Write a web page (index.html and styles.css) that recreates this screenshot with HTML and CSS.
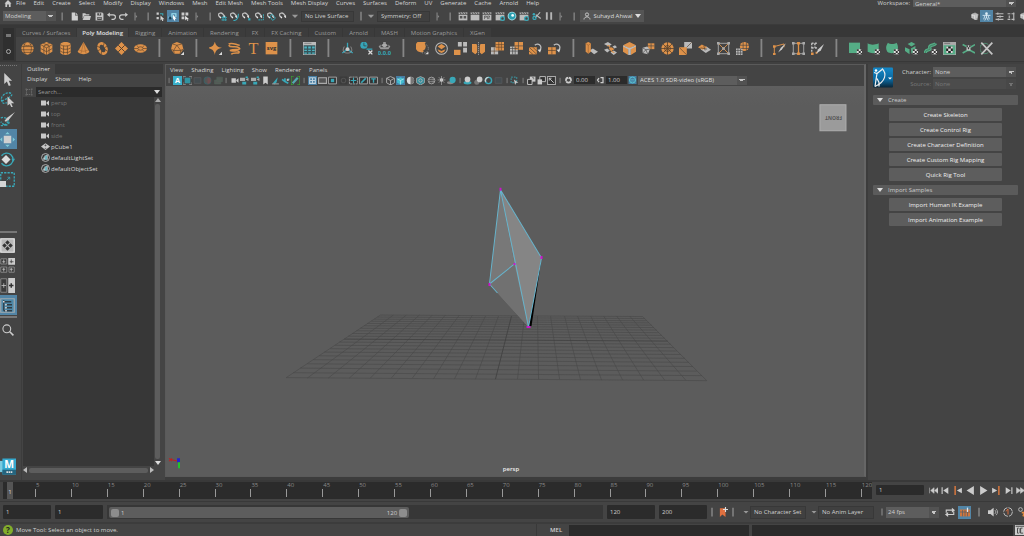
FILE: index.html
```html
<!DOCTYPE html>
<html lang="en">
<head>
<meta charset="utf-8">
<title>Modeling workspace</title>
<link rel="stylesheet" href="styles.css">
</head>
<body>
<svg class="defs" aria-hidden="true">
<defs>
<symbol id="home" viewBox="0 0 16 16"><path d="M0 8 8 0l8 8h-2v8h-4v-6H6v6H2V8z" fill="#ccc"/></symbol>
<symbol id="sep" viewBox="0 0 16 16"><path d="M8 1v14" stroke="#858585" stroke-width="2.4"/></symbol>
<symbol id="sepr" viewBox="0 0 16 16"><path d="M6 1v14" stroke="#858585" stroke-width="2"/><path d="m7 5 3 3-3 3z" fill="#858585"/></symbol>
<symbol id="bar" viewBox="0 0 16 16"><path d="M8 -1v18" stroke="#868686" stroke-width="1.6"/></symbol>
<symbol id="caret" viewBox="0 0 16 16"><path d="M3 6h10l-5 5z" fill="#999"/></symbol>
<symbol id="new" viewBox="0 0 16 16"><path d="M3 1h6v5h5v9H3zM10 1l4 4h-4z" fill="#d0d0d0"/></symbol>
<symbol id="open" viewBox="0 0 16 16"><path d="M1 2h5l1 2h6v2H4l-3 6zM4 7h12l-2 7H1z" fill="#c8c8c8"/></symbol>
<symbol id="save" viewBox="0 0 16 16"><path d="M1 1h12l2 2v12H1z" fill="#c4c4c4"/><path d="M4 2h7v4H4zM4 9h8v5H4z" fill="#4a4a4a"/><path d="M5 11h6M8 2v3" stroke="#c4c4c4" stroke-width="1.5"/></symbol>
<symbol id="undo" viewBox="0 0 16 16"><path d="M4 5h7a3.5 3.5 0 0 1 0 8H8" fill="none" stroke="#ccc" stroke-width="2"/><path d="M0 5l5-4v8z" fill="#ccc"/></symbol>
<symbol id="redo" viewBox="0 0 16 16"><path d="M12 5H5a3.5 3.5 0 0 0 0 8h3" fill="none" stroke="#ccc" stroke-width="2"/><path d="M16 5l-5-4v8z" fill="#ccc"/></symbol>
<symbol id="selh" viewBox="0 0 16 16"><path d="M1 1h4v4H1zM1 9h4v4H1z" fill="#ccc"/><path d="M7 3h5v3" stroke="#39a8b8" stroke-width="2" fill="none"/><path d="m8 6 7 7h-3l1 3h-2l-1-3-2 2z" fill="#d5d5d5"/></symbol>
<symbol id="selo" viewBox="0 0 16 16"><path d="M1 9h6V3h7v6" stroke="#9fe4f4" stroke-width="2" fill="none"/><path d="M2 8h4v5H2z" fill="#173b52"/><path d="m9 5 6 7h-3l1 3h-2l-1-3-1 2z" fill="#fff"/></symbol>
<symbol id="selc" viewBox="0 0 16 16"><path d="M1 1h5v5H1zM8 1h5v5H8zM1 8h5v5H1z" fill="#ccc"/><path d="m7 6 8 7h-3l1 3h-2l-1-3-3 2z" fill="#eee" stroke="#444" stroke-width=".6"/></symbol>
<symbol id="mag" viewBox="0 0 16 16"><path d="M3 9 1 6c-1-3 4-6 7-3l4 5" fill="none" stroke="#bdbdbd" stroke-width="2.4"/><path d="m3 8 2 3M10 7l2 3" stroke="#eee" stroke-width="2.4"/></symbol>
<symbol id="mgrid" viewBox="0 0 16 16"><use href="#mag"/><path d="M6 10h10M6 14h10M9 7v9M13 7v9" stroke="#39a8b8" stroke-width="1.5"/></symbol>
<symbol id="mcurve" viewBox="0 0 16 16"><use href="#mag"/><path d="M6 15c6 1 9-5 9-12" stroke="#39a8b8" stroke-width="2" fill="none"/></symbol>
<symbol id="mpoint" viewBox="0 0 16 16"><use href="#mag"/><path d="M11 11h4v4h-4z" fill="#39a8b8"/></symbol>
<symbol id="mcent" viewBox="0 0 16 16"><use href="#mag"/><path d="M6 14h9V3" stroke="#39a8b8" stroke-width="1.7" stroke-dasharray="3 1" fill="none"/></symbol>
<symbol id="mplane" viewBox="0 0 16 16"><use href="#mag"/><path d="M9 4l6 7-5 4-5-7z" fill="none" stroke="#39a8b8" stroke-width="1.7"/></symbol>
<symbol id="clap" viewBox="0 0 16 16"><path d="M1 6h14v9H1z" fill="#bcbcbc"/><path d="M1 2h14v3H1z" fill="#aaa"/><path d="m3 2 2 3M7 2l2 3M11 2l2 3" stroke="#444" stroke-width="1.5"/></symbol>
<symbol id="clap1" viewBox="0 0 16 16"><use href="#clap"/><path d="M3 8h4v4H3zM9 8h4v4H9z" fill="#555"/></symbol>
<symbol id="clap3" viewBox="0 0 16 16"><use href="#clap"/><path d="M4 13V8h3v2H5M9 13V8h3v2l-2 1 2 2" stroke="#444" fill="none"/></symbol>
<symbol id="clapg" viewBox="0 0 16 16"><use href="#clap"/><circle cx="12" cy="12" r="3" fill="#444" stroke="#39a8b8" stroke-width="2"/></symbol>
<symbol id="hyper" viewBox="0 0 16 16"><circle cx="8" cy="8" r="7" fill="#a5dbe3"/><circle cx="8" cy="8" r="5.500" fill="#299eb0"/><circle cx="9" cy="7" r="2.2" fill="#eefcff"/></symbol>
<symbol id="rset" viewBox="0 0 16 16"><path d="m5 11 8-9M6 6l8 6" stroke="#bbb" stroke-width="1.8"/><circle cx="4" cy="11" r="2.5" fill="none" stroke="#39a8b8" stroke-width="2"/><circle cx="3" cy="5" r="2" fill="#39a8b8"/></symbol>
<symbol id="pause" viewBox="0 0 16 16"><path d="M3 2h3v12H3zM10 2h3v12h-3z" fill="#b5b5b5"/></symbol>
<symbol id="user" viewBox="0 0 16 16"><circle cx="8" cy="5" r="3.2" fill="none" stroke="#ddd" stroke-width="1.6"/><path d="M2 15c0-7 12-7 12 0" fill="none" stroke="#ddd" stroke-width="1.6"/></symbol>
<symbol id="head" viewBox="0 0 16 16"><path d="M2 4 9 1l6 3-2 10H9L2 10z" fill="#aaa"/><path d="M3 6h5v6M5 3v8M9 4v10M12 4v7" stroke="#eee" fill="none"/></symbol>
<symbol id="man" viewBox="0 0 16 16"><circle cx="8" cy="3" r="2.4" fill="#dcecf5"/><path d="M1 6h14M8 5v5M5 15l3-6 3 6M5 7l-2 6M11 7l2 6" stroke="#dcecf5" stroke-width="1.5" fill="none"/></symbol>
<symbol id="attr" viewBox="0 0 16 16"><path d="M1 3h14M3 8h12M1 13h14M5 1v4M9 6v4M6 11v4" stroke="#bbb" stroke-width="2"/></symbol>
<symbol id="tool" viewBox="0 0 16 16"><path d="M1 3h13M1 13h13" stroke="#bbb" stroke-width="2" stroke-dasharray="5 2"/><path d="M12 1v14M4 6v5" stroke="#bbb" stroke-width="2"/></symbol>

<symbol id="sphere" viewBox="0 0 20 20"><circle cx="10" cy="10" r="9.5" fill="#de924a"/><path d="M1 7h18M0 12h20M3 16h14M7 1c-4 5-4 13 0 18M13 1c4 5 4 13 0 18M4 4c4 2 8 2 12 0" stroke="#54402d" fill="none"/></symbol>
<symbol id="cube" viewBox="0 0 20 20"><path d="m10 0 9 4v11l-9 5-9-5V4z" fill="#de924a"/><path d="m1 4 9 5 9-5M10 9v11M5 2l9 4v12M15 2 6 6v12M1 10l9 5 9-5" stroke="#54402d" fill="none"/></symbol>
<symbol id="cyl" viewBox="0 0 20 20"><path d="M2 3c3-4 13-4 16 0v14c-3 4-13 4-16 0z" fill="#de924a"/><path d="M2 4c3 3 13 3 16 0M2 9c3 3 13 3 16 0M2 14c3 3 13 3 16 0M7 6v13M13 6v13" stroke="#54402d" fill="none"/></symbol>
<symbol id="cone" viewBox="0 0 20 20"><path d="m10 0 9 15c-3 5-15 5-18 0z" fill="#de924a"/><path d="M3 12c4 3 10 3 14 0M10 1 6 18M10 1l4 17" stroke="#a66934" fill="none"/></symbol>
<symbol id="torus" viewBox="0 0 20 20"><g transform="rotate(-25 10 10)"><ellipse cx="10" cy="10" rx="5.7" ry="8.2" fill="none" stroke="#de924a" stroke-width="4"/><path d="M3 2l4 5M17 2l-4 5M2 10h4M14 10h4M4 18l3-5M16 18l-3-5" stroke="#54402d"/></g></symbol>
<symbol id="plane" viewBox="0 0 20 20"><path d="m10 0 10 10-10 10L0 10z" fill="#de924a"/><path d="m5 5 10 10M15 5 5 15" stroke="#54402d" stroke-width="1.5"/></symbol>
<symbol id="disc" viewBox="0 0 20 20"><ellipse cx="10" cy="10" rx="10" ry="6.5" fill="#de924a"/><ellipse cx="10" cy="10" rx="4" ry="2.6" fill="none" stroke="#54402d"/><path d="M0 10h6M14 10h6M4 5l3 3M16 5l-3 3M4 15l3-3M16 15l-3-3" stroke="#54402d"/></symbol>
<symbol id="plat" viewBox="0 0 20 20"><path d="m9 0 8 3 2 8-5 7H5l-5-7 2-8z" fill="#de924a"/><path d="m2 3 7 2 8-2M9 5 4 13h11zM0 11l4 2 1 5M19 11l-4 2-1 5" stroke="#54402d" fill="none"/><path d="M20 15v5h-5z" fill="#ddd"/></symbol>
<symbol id="super" viewBox="0 0 20 20"><path d="M9-1c1 6 4 9 11 10-8 2-10 5-11 11-1-7-4-9-11-11 7-1 10-4 11-10z" fill="#de924a"/><path d="M20 15v5h-5z" fill="#ddd"/></symbol>
<symbol id="helix" viewBox="0 0 20 20"><path d="M1 3c6-3 12 2 17 2M1 5c3 5 11 0 16 4s-8 1-14 4M3 13c4 3 13-2 14 2s-9 0-12 4" stroke="#de924a" stroke-width="2.4" fill="none"/></symbol>
<symbol id="type" viewBox="0 0 20 20"><text x="10" y="19" text-anchor="middle" class="glyph-t">T</text></symbol>
<symbol id="svgi" viewBox="0 0 20 20"><path d="M1 0h18v19H1z" fill="#de924a"/><text x="10" y="13" text-anchor="middle" class="glyph-svg">svg</text></symbol>
<symbol id="sheet" viewBox="0 0 20 20"><path d="M0 0h20v20H0z" fill="#bbb"/><path d="M1 5h18v14H1z" fill="#36545a"/><path d="M2 7h4v3H2zM8 7h4v3H8zM14 7h4v3h-4zM2 12h4v2H2zM8 12h4v2H8zM14 12h4v2h-4zM2 16h4v2H2zM8 16h4v2H8zM14 16h4v2h-4z" fill="#4fb5c2"/><path d="M2 2h11" stroke="#666"/></symbol>
<symbol id="axis" viewBox="0 0 20 20"><path d="M10 1v10L2 17M10 11l8 6" stroke="#36a5b8" stroke-width="2" fill="none"/><path d="M5 7c-4 8 0 10 5 10s9-2 5-10" stroke="#aaa" fill="none"/><circle cx="10" cy="11" r="3" fill="#ccc"/></symbol>
<symbol id="hist" viewBox="0 0 20 20"><circle cx="6" cy="5" r="5.5" fill="#36a5b8"/><path d="M6 1v5h4" stroke="#333" fill="none"/><path d="M10 11h9" stroke="#36a5b8" stroke-width="2"/><path d="m13 13 6 6M19 13l-6 6" stroke="#ddd" stroke-width="2"/></symbol>
<symbol id="freeze" viewBox="0 0 20 20"><path d="m10 1 5 4-5 4-5-4z" fill="#aaa"/><path d="m1 7 3-3v4h12V4l3 3-3 4H4zM8 0h4v3H8z" fill="#999"/><text x="10" y="20" text-anchor="middle" class="glyph-num">0,0,0</text></symbol>
<symbol id="br" viewBox="0 0 20 20"><path d="M2-2h-5v24h5M18-2h5v24h-5" stroke="#37b52c" stroke-width="1.6" fill="none"/></symbol>
<symbol id="combine" viewBox="0 0 20 20"><path d="M15 1A9 9 0 1 0 12 15 8 8 0 0 1 15 1z" fill="#de924a"/><circle cx="12" cy="10" r="7" fill="none" stroke="#aaa" stroke-dasharray="2 2"/><circle cx="8" cy="7" r="7" fill="#de924a"/><path d="m14 19 5-4v4z" fill="#ddd"/></symbol>
<symbol id="bool" viewBox="0 0 20 20"><circle cx="10" cy="10" r="9" fill="none" stroke="#bbb" stroke-width="1.6"/><path d="m10 3 6 4-6 4-6-4zM4 11l6 3 6-3-2 4-4 2-4-2z" fill="#de924a"/></symbol>
<symbol id="separate" viewBox="0 0 20 20"><path d="M6 0h6v7H6zM14 0h6v7h-6zM14 9h6v7h-6z" fill="#bbb"/><path d="M0 12h10v8H0z" fill="#de924a"/></symbol>
<symbol id="mirror" viewBox="0 0 20 20"><path d="M0 3h7l1 3v10l-3 3-5-4zM20 3h-7l-1 3v10l3 3 5-4z" fill="#de924a"/><path d="M10 0v20" stroke="#bbb" stroke-dasharray="2 1"/></symbol>
<symbol id="smooth" viewBox="0 0 20 20"><path d="M0 8h11v11H0z" fill="#bbb"/><path d="M7 0h13v13H7z" fill="#de924a"/><path d="M7 4h13M7 8h13M12 0v13M16 0v13M0 14h11M5 8v11" stroke="#62462d"/></symbol>
<symbol id="reduce" viewBox="0 0 20 20"><path d="M0 7h12v12H0z" fill="#bbb"/><path d="M7 0h13v12H7z" fill="#de924a"/><path d="M7 6h13M13 0v12M0 10h12M0 14h12M4 7v12M8 7v12" stroke="#444"/></symbol>
<symbol id="remesh" viewBox="0 0 20 20"><path d="M0 8h12v11H0z" fill="#de924a"/><path d="M0 8l12 11M6 8l6 6M0 14l6 5" stroke="#54402d"/><path d="M9 5a5 5 0 1 1 8 7" fill="none" stroke="#bbb" stroke-width="2"/><path d="m13 12 6-1-2 5z" fill="#ddd"/></symbol>
<symbol id="retopo" viewBox="0 0 20 20"><path d="M0 8h12v11H0z" fill="#de924a"/><path d="M6 8v11M0 13h12" stroke="#54402d"/><path d="M9 5a5 5 0 1 1 8 7" fill="none" stroke="#bbb" stroke-width="2"/><path d="m13 12 6-1-2 5z" fill="#ddd"/></symbol>
<symbol id="extrude" viewBox="0 0 20 20"><path d="m7 13 5-3 8 5-6 4z" fill="#bbb"/><path d="m1 2 4-2 4 2v13l-4 3-4-3z" fill="#de924a"/><path d="m1 2 4 3 4-3M5 5v12" stroke="#9a6130" fill="none"/></symbol>
<symbol id="bridge" viewBox="0 0 20 20"><path d="m0 3 6-3 6 4-5 3zM10 16l5-3 5 3-5 4zM0 12l5-2 4 3-4 3zM13 7l4-2 3 3-4 2z" fill="#bbb"/><path d="m7 10 5-2 4 3-5 3z" fill="#de924a"/><path d="M5 6c7-3 1 9 11 10" stroke="#de924a" fill="none" stroke-width="1.6"/></symbol>
<symbol id="bevel" viewBox="0 0 20 20"><path d="m10 0 10 5-10 5L0 5zM0 6l8 4v10l-8-5zM20 6l-8 4v10l8-5z" fill="#de924a"/><path d="m9 9-9-4v2l8 4v9h4v-9l8-4V5l-9 4z" fill="#bbb"/></symbol>
<symbol id="multi" viewBox="0 0 20 20"><path d="M9 2h10v9H9z" fill="#de924a"/><path d="m1 9 7-2 4 4-3 8-8-2z" fill="#bbb"/><path d="m1 9 5 3 6-1M6 12l-5 5M14 2v9M9 6h10M6 12l3 7" stroke="#444" fill="none"/></symbol>
<symbol id="circ" viewBox="0 0 20 20"><circle cx="10" cy="10" r="9.5" fill="#de924a"/><circle cx="10" cy="10" r="4.5" fill="none" stroke="#54402d" stroke-width="1.3"/><path d="M10 0v20M0 10h20M3 3l14 14M17 3 3 17" stroke="#54402d" stroke-width="1.2"/></symbol>
<symbol id="dup" viewBox="0 0 20 20"><path d="M8 0h12v10H8z" fill="#bbb"/><path d="M0 8h12v12H0z" fill="#de924a"/><path d="m0 8 12 12M12 8 20 0" stroke="#54402d"/></symbol>
<symbol id="collapse" viewBox="0 0 20 20"><path d="m4 11 9-4 7 5-8 5z" fill="#bbb"/><path d="m0 8 6-4 8 4-7 4z" fill="#de924a"/><path d="m4 9 10 2M9 6l2 7" stroke="#54402d"/></symbol>
<symbol id="lattice" viewBox="0 0 20 20"><path d="M2 2h16v16H2z" fill="none" stroke="#aaa" stroke-width="1.4"/><path d="m3 3 14 14M17 3 3 17" stroke="#de924a" stroke-width="1.4"/><path d="M0 0h4v4H0zM16 0h4v4h-4zM0 16h4v4H0zM16 16h4v4h-4zM8 8h4v4H8z" fill="#aaa"/></symbol>
<symbol id="smspread" viewBox="0 0 20 20"><circle cx="13" cy="7" r="7" fill="#de924a"/><path d="M0 10h10v10H0z" fill="#bbb"/><path d="M0 13h10M0 17h10M3 10v10M7 10v10M6 5h14M8 10h12M11 0v10M16 0v14" stroke="#444"/></symbol>
<symbol id="cut" viewBox="0 0 20 20"><path d="M2 19V7l15-4v5" stroke="#de924a" stroke-width="1.5" fill="none"/><path d="m8 16 4-7 8-7-6 9z" fill="#ccc"/><path d="M0 5h4v4H0zM0 17h4v3H0z" fill="#de924a"/></symbol>
<symbol id="loop" viewBox="0 0 20 20"><path d="M2 2h16v16H2z" fill="none" stroke="#aaa" stroke-width="1.4"/><path d="M10 2v16" stroke="#de924a" stroke-width="2"/><path d="M0 0h4v4H0zM16 0h4v4h-4zM0 16h4v4H0zM16 16h4v4h-4z" fill="#aaa"/><circle cx="10" cy="2" r="2.5" fill="#de924a"/><circle cx="10" cy="18" r="2.5" fill="#de924a"/></symbol>
<symbol id="quad" viewBox="0 0 20 20"><path d="M1 2h10M1 9h8M1 2v16M6 2v7" stroke="#bbb" stroke-width="2.4" stroke-dasharray="3 2"/><path d="M0 16h4v4H0zM7 15h3v3H7z" fill="#de924a"/><path d="m8 18 3-7 9-8-5 10z" fill="#ccc"/></symbol>
<symbol id="chk" viewBox="0 0 20 20"><path d="M12 11h8v8h-8z" fill="#ddd"/><path d="M12 11h3v3h-3zM18 11h2v3h-2zM15 14h3v3h-3zM12 17h3v2h-3zM18 17h2v2h-2z" fill="#333"/></symbol>
<symbol id="uvp" viewBox="0 0 20 20"><path d="M0 1h17v16H0z" fill="#55ad86"/><use href="#chk"/></symbol>
<symbol id="uvc" viewBox="0 0 20 20"><path d="M1 2c5 3 10 3 17 0v12c-5 4-11 4-17 1z" fill="#55ad86"/><use href="#chk"/></symbol>
<symbol id="uvs" viewBox="0 0 20 20"><path d="M3 1c4 3 9 3 13 0 3 4 3 9 1 14-6 3-11 3-15 0-3-5-2-10 1-14z" fill="#55ad86"/><use href="#chk"/></symbol>
<symbol id="uva" viewBox="0 0 20 20"><path d="m4 3 6-3 6 3-6 4zM0 8l7 3v8l-7-5zM9 10l7-4v6l-6 6z" fill="#55ad86"/><use href="#chk"/></symbol>
<symbol id="uvr" viewBox="0 0 20 20"><path d="M2 17c0-7 9-3 7-8S16 6 18 2" fill="none" stroke="#55ad86" stroke-width="5"/><path d="M2 17c0-7 9-3 7-8S16 6 18 2" fill="none" stroke="#3b6853"/><use href="#chk"/></symbol>
<symbol id="uve" viewBox="0 0 20 20"><path d="M0 0h20v20H0z" fill="#aaa"/><path d="M1 5h18v14H1z" fill="#55ad86"/><path d="M5 7h10v10H5z" fill="#222"/><path d="M5 7h3v3H5zM12 7h3v3h-3zM8 10h4v4H8zM5 14h3v3H5zM12 14h3v3h-3z" fill="#ddd"/><path d="M2 2h9" stroke="#555"/></symbol>
<symbol id="uvx" viewBox="0 0 20 20"><path d="m1 4 8 4h4l7-4M1 17l7-4h5l7 4" stroke="#55ad86" stroke-width="2.5" fill="none"/><path d="M7 5h6v8H7z" fill="#ccc"/><path d="M7 5h2v3H7zM11 5h2v3h-2zM9 8h2v3H9z" fill="#333"/></symbol>
<symbol id="uvk" viewBox="0 0 20 20"><path d="M13 4a8 8 0 1 0 0 12" stroke="#55ad86" fill="none"/><path d="m2 1 17 18M19 1 2 19" stroke="#c5c5c5" stroke-width="2.6"/></symbol>

<symbol id="tsel" viewBox="0 0 20 20"><path d="M5 0l12 12h-5l3 7-3 1-3-7-4 4z" fill="#ccc"/></symbol>
<symbol id="tlas" viewBox="0 0 20 20"><path d="M3 13C-2 7 9-2 15 2c4 4-10 8-12 10 0 4 4 4 6 2" stroke="#39a8b8" stroke-width="1.7" stroke-dasharray="3 1.5" fill="none"/><path d="m10 6 9 9h-4l2 5h-2l-2-4-3 2z" fill="#ccc"/></symbol>
<symbol id="tpaint" viewBox="0 0 20 20"><path d="M1 8c6-3 14 4 10 8s-8-1-10-3M1 18c4 1 10-3 10-7" stroke="#39a8b8" stroke-width="1.7" stroke-dasharray="3 1.5" fill="none"/><path d="m6 12 3-4 11-8-8 10-4 3z" fill="#ccc"/></symbol>
<symbol id="tmove" viewBox="0 0 20 20"><path d="M5 5h10v10H5z" fill="#d0d0d0"/><path d="m7 3 3-3 3 3zM7 17l3 3 3-3zM3 7l-3 3 3 3zM17 7l3 3-3 3z" fill="#80cbd8"/></symbol>
<symbol id="trot" viewBox="0 0 20 20"><path d="M2 5a8.500 8.500 0 1 1 0 10" fill="none" stroke="#39a8b8" stroke-width="1.8"/><path d="m8 4 6 6-6 6-6-6z" fill="#ddd"/><path d="m15 9 5 0-2 4z" fill="#39a8b8"/></symbol>
<symbol id="tscale" viewBox="0 0 20 20"><path d="M1 1h18v18H1z" fill="none" stroke="#39a8b8" stroke-width="1.7" stroke-dasharray="3 1.5"/><path d="m9 11 4-4h-3M13 7v3" stroke="#39a8b8" fill="none"/><path d="M0 12h8v8H0z" fill="#d5d5d5"/></symbol>
<symbol id="lone" viewBox="0 0 20 20"><path d="M1 1h18v18H1z" fill="#b8b8b8" stroke="#eee" stroke-width="1.5"/><path d="m10 3 3 3-3 3-3-3zM10 17l3-3-3-3-3 3zM3 10l3-3 3 3-3 3zM17 10l-3-3-3 3 3 3z" fill="#333"/></symbol>
<symbol id="lfour" viewBox="0 0 20 20"><path d="M1 1h8v7H1zM1 12h8v7H1zM12 12h7v7h-7z" fill="#3b3b3b" stroke="#999"/><path d="M11 0h9v9h-9z" fill="#ccc"/><path d="M5 2v5M3 5h4M5 13v5M3 15h4M15 13v5M13 15h4" stroke="#ccc"/><path d="M15 2v5M13 5h5" stroke="#333"/></symbol>
<symbol id="ltwo" viewBox="0 0 20 20"><path d="M1 1h8v18H1z" fill="#3b3b3b" stroke="#999"/><path d="M11 0h9v20h-9z" fill="#ccc"/><path d="M5 7v6M2 10h6" stroke="#ccc"/><path d="M15 7v6M12 10h6" stroke="#333" stroke-width="2"/></symbol>
<symbol id="lout" viewBox="0 0 20 20"><path d="M1 1h18v18H1z" fill="#4d88a8" stroke="#a0a9ae" stroke-width="1.6"/><path d="M5 3v14M5 5h10M8 9h8M8 13h8M5 17h11" stroke="#303c44" stroke-width="1.7"/><path d="M4 4h2v2H4zM7 8h2v2H7zM7 12h2v2H7zM7 16h2v2H7z" fill="#ddd"/></symbol>
<symbol id="find" viewBox="0 0 20 20"><circle cx="8" cy="8" r="6.5" fill="none" stroke="#ccc" stroke-width="1.8"/><path d="m13 13 6 6" stroke="#ccc" stroke-width="2.6"/></symbol>
<symbol id="maya" viewBox="0 0 20 20"><path d="M0 3h5v14H0z" fill="#7acbe0"/><path d="M3 0h17v20H3z" fill="#35a9ce"/><path d="M3 14h17v6H3z" fill="#25647e"/><text x="11.500" y="12" text-anchor="middle" class="glyph-m">M</text><path d="M8 17h8" stroke="#ddd" stroke-width="2" stroke-dasharray="2 .7"/></symbol>
<symbol id="cam" viewBox="0 0 16 16"><path d="M0 3h10v10H0zM11 7l5-4v10l-5-4z" fill="#c8c8c8"/></symbol>
<symbol id="mesh" viewBox="0 0 16 16"><path d="m8 2 8 6-8 6-8-6z" fill="#c8c8c8"/><path d="m8 4 2 2-2 2-2-2zM8 10l2 2h-4z" fill="#555"/></symbol>
<symbol id="set" viewBox="0 0 16 16"><circle cx="8" cy="8" r="7" fill="none" stroke="#bbb" stroke-width="1.6"/><path d="M4 12V8h2V5l6-2v9z" fill="#b9c9cc"/><path d="M8 5h2v7H8z" fill="#39a8b8"/></symbol>
<symbol id="frame" viewBox="0 0 16 16"><path d="M3 3h10v10H3z" fill="none" stroke="#757575" stroke-width="1.5" stroke-dasharray="3 1.5"/><path d="M1 1h3v3H1zM12 1h3v3h-3zM1 12h3v3H1zM12 12h3v3h-3z" fill="#666"/></symbol>

<symbol id="va" viewBox="0 0 16 16"><path d="M0 0h16v16H0z" fill="#3aafc9"/><text x="8" y="13" text-anchor="middle" class="glyph-a">A</text></symbol>
<symbol id="vbox" viewBox="0 0 16 16"><path d="M3 3h10v10H3z" fill="#3293a0"/><path d="M0 5V1h5M11 1h5v4M16 11v4h-5M5 15H0v-4" stroke="#888" stroke-width="1.6" fill="none"/></symbol>
<symbol id="vdim" viewBox="0 0 16 16"><path d="M2 3h12v10H2z" fill="#444c50" stroke="#56595b" stroke-width="1.5"/></symbol>
<symbol id="vdimc" viewBox="0 0 16 16"><circle cx="8" cy="8" r="6" fill="#555" stroke="#3f6065" stroke-width="2"/><path d="M8 2a6 6 0 0 1 0 12z" fill="#704e51"/></symbol>
<symbol id="vdimg" viewBox="0 0 16 16"><path d="M1 7h11v7H1zM5 2h10v8H5z" fill="#555a57" stroke="#50665a"/></symbol>
<symbol id="vcam2" viewBox="0 0 16 16"><path d="M0 3h9v6H0zM10 6l5-3v6l-5-3z" fill="#aaa"/><path d="M4 10h7v5H4zM10 1h4v3h-4z" fill="#39a8b8"/></symbol>
<symbol id="book" viewBox="0 0 16 16"><path d="M4 1h8v14l-4-3-4 3z" fill="#ccc"/></symbol>
<symbol id="vbrush" viewBox="0 0 16 16"><path d="m3 13 9-11-2 9-4 4z" fill="#39a8b8"/><path d="M2 14h12" stroke="#999" stroke-width="2"/></symbol>
<symbol id="vnode" viewBox="0 0 16 16"><path d="m2 6 5 4 6 3M7 10V4M12 6h3" stroke="#39a8b8" stroke-width="3"/><circle cx="12" cy="7" r="2" fill="#bbb"/></symbol>
<symbol id="vpen" viewBox="0 0 16 16"><path d="M5 0H0v16h5M11 0h5v16h-5" stroke="#37b52c" stroke-width="1.8" fill="none"/><path d="m3 13 9-10" stroke="#55a8b0" stroke-width="4"/></symbol>
<symbol id="vgrid" viewBox="0 0 16 16"><path d="M0 0h16v16H0z" fill="#477da2"/><path d="M3 3h10v10H3zM8 3v10M3 8h10" fill="none" stroke="#bdd1dd" stroke-width="2"/></symbol>
<symbol id="vgate" viewBox="0 0 16 16"><path d="M1 3h14v10H1z" fill="#555" stroke="#aaa" stroke-width="2"/></symbol>
<symbol id="vgatet" viewBox="0 0 16 16"><path d="M1 2h14v12H1z" fill="#333" stroke="#aaa" stroke-width="1.6"/><path d="M5 5h6v6H5z" fill="#39a8b8"/></symbol>
<symbol id="vdark" viewBox="0 0 16 16"><path d="M1 1h14v14H1z" fill="#3b3b3b"/><circle cx="8" cy="8" r="4" fill="none" stroke="#505050" stroke-width="2"/></symbol>
<symbol id="vcross" viewBox="0 0 16 16"><path d="M1 2h14v12H1z" fill="#333" stroke="#aaa" stroke-width="1.5" stroke-dasharray="4 1"/><path d="M8 3v10M3 8h10" stroke="#39a8b8" stroke-width="2"/></symbol>
<symbol id="vdiag" viewBox="0 0 16 16"><path d="M1 2h14v12H1z" fill="#333" stroke="#aaa" stroke-width="1.6"/><path d="m4 12 8-8" stroke="#39a8b8" stroke-width="3"/></symbol>
<symbol id="vt" viewBox="0 0 16 16"><path d="M1 2h14v12H1z" fill="#333" stroke="#aaa" stroke-width="1.6"/><path d="M4 5h8M8 5v7" stroke="#39a8b8" stroke-width="2.4"/></symbol>
<symbol id="vwire" viewBox="0 0 16 16"><path d="m8 1 7 3v8l-7 4-7-4V4zM1 4l7 4 7-4M8 8v8" fill="none" stroke="#b5b5b5" stroke-width="1.5"/></symbol>
<symbol id="vshade" viewBox="0 0 16 16"><path d="M0 0h16v16H0z" fill="#477da2"/><path d="m8 2 6 3v7l-6 3-6-3V5z" fill="#43bdd0"/><path d="m2 5 6 3 6-3M8 8v7" stroke="#d3f6f8" fill="none"/></symbol>
<symbol id="vhalf" viewBox="0 0 16 16"><circle cx="8" cy="8" r="6.5" fill="#ddd"/><path d="M8 1.500a6.500 6.500 0 0 1 0 13z" fill="#777"/></symbol>
<symbol id="vtex" viewBox="0 0 16 16"><path d="m8 1 7 3v8l-7 4-7-4V4z" fill="#338b99" stroke="#aaa" stroke-width="1.5"/><circle cx="8" cy="8" r="3" fill="none" stroke="#bbb" stroke-width="1.5"/></symbol>
<symbol id="vchk" viewBox="0 0 16 16"><circle cx="8" cy="8" r="6" fill="#333" stroke="#aaa" stroke-width="1.5"/><path d="M5 3v10M9 2v12M12 4v8M3 6h11M3 10h11" stroke="#aaa"/></symbol>
<symbol id="vlight" viewBox="0 0 16 16"><circle cx="8" cy="7" r="3" fill="#ddd"/><path d="M8 0v16M1 7h14M3 2l10 10M13 2 3 12" stroke="#bbb"/></symbol>
<symbol id="vshadow" viewBox="0 0 16 16"><ellipse cx="6" cy="12" rx="6" ry="2.500" fill="#888"/><circle cx="10" cy="7" r="5.500" fill="#39a8b8"/></symbol>
<symbol id="vao" viewBox="0 0 16 16"><ellipse cx="8" cy="12" rx="7" ry="3" fill="#39a8b8"/><circle cx="8" cy="6" r="5" fill="#ccc"/></symbol>
<symbol id="vblur" viewBox="0 0 16 16"><circle cx="5" cy="11" r="4.500" fill="#777"/><circle cx="10" cy="6" r="5" fill="#ccc"/></symbol>
<symbol id="vaa" viewBox="0 0 16 16"><circle cx="8" cy="8" r="5.500" fill="none" stroke="#39a8b8" stroke-width="2.500"/><path d="M8 2.500a5.500 5.500 0 0 0-5 8" fill="none" stroke="#ccc" stroke-width="2.500"/></symbol>
<symbol id="viso" viewBox="0 0 16 16"><path d="M2 2h10v10H2z" fill="none" stroke="#39a8b8" stroke-width="1.600" stroke-dasharray="3 2"/><path d="m7 6 8 6h-4l-2 4z" fill="#ccc"/></symbol>
<symbol id="vstack" viewBox="0 0 16 16"><path d="M5 1h10v9H5z" fill="#ccc"/><path d="M1 6h8v9H1z" fill="#333" stroke="#ccc" stroke-width="1.600"/><path d="M9 3h3v3" stroke="#333" fill="none"/></symbol>
<symbol id="vback" viewBox="0 0 16 16"><path d="M5 1h10v9H5z" fill="#333" stroke="#ccc" stroke-width="1.500"/><path d="M1 6h8v9H1z" fill="#ccc"/></symbol>
<symbol id="vx" viewBox="0 0 16 16"><path d="M1 1h14v14H1z" fill="#333" stroke="#aaa" stroke-width="1.800"/><path d="m4 4 8 8M8 4H4v4" stroke="#ccc" stroke-width="1.600" fill="none"/></symbol>
<symbol id="vexp" viewBox="0 0 16 16"><circle cx="8" cy="8" r="5" fill="none" stroke="#ccc" stroke-width="3.500"/><path d="M8 0v4M15 12l-3-2M1 12l3-2" stroke="#444" stroke-width="1.500"/></symbol>
<symbol id="vgam" viewBox="0 0 16 16"><path d="M8 3h5v10H8M5 4 2 8l3 4" fill="none" stroke="#ccc" stroke-width="2.500"/></symbol>
<symbol id="vcm" viewBox="0 0 16 16"><path d="M0 0h16v16H0z" fill="#477da2"/><circle cx="8" cy="8" r="6" fill="none" stroke="#58c6d2" stroke-width="2"/><path d="M4 7h8M4 10h8" stroke="#58c6d2"/></symbol>

<symbol id="p1" viewBox="0 0 16 16"><path d="M1 3v10M9 3v10L3 8zM16 3v10l-6-5z" fill="#ccc" stroke="#ccc" stroke-width="1"/></symbol>
<symbol id="p2" viewBox="0 0 16 16"><path d="M2 2v12" stroke="#ccc" stroke-width="2"/><path d="M13 2v12L4 8z" fill="#ccc"/></symbol>
<symbol id="p3" viewBox="0 0 16 16"><path d="M2 0v16" stroke="#e07a3e" stroke-width="2.500"/><path d="M14 3v10L5 8z" fill="#ccc"/></symbol>
<symbol id="p4" viewBox="0 0 16 16"><path d="M14 0v16L1 8z" fill="#ccc"/></symbol>
<symbol id="p5" viewBox="0 0 16 16"><path d="M2 0v16l13-8z" fill="#ccc"/></symbol>
<symbol id="p6" viewBox="0 0 16 16"><path d="M14 0v16" stroke="#e07a3e" stroke-width="2.500"/><path d="M2 3v10l9-5z" fill="#ccc"/></symbol>
<symbol id="p7" viewBox="0 0 16 16"><path d="M14 2v12" stroke="#ccc" stroke-width="2"/><path d="M3 2v12l9-6z" fill="#ccc"/></symbol>
<symbol id="p8" viewBox="0 0 16 16"><path d="M1 3v10l7-5zM8 3v10l7-5zM16 3v10" fill="#ccc" stroke="#ccc"/></symbol>
<symbol id="bm" viewBox="0 0 16 16"><path d="M3 2h9v14l-5-4-4 4z" fill="#e0703f"/><path d="M12 0v8M8 4h8" stroke="#ddd" stroke-width="1.800"/></symbol>
<symbol id="rep" viewBox="0 0 16 16"><path d="M2 9V5h10M14 7v5H4" fill="none" stroke="#ccc" stroke-width="1.800"/><path d="m11 1 5 4-5 4zM5 8l-5 4 5 4z" fill="#ccc"/></symbol>
<symbol id="cache" viewBox="0 0 16 16"><path d="M0 4h16v11H0z" fill="#d0763c"/><path d="M0 8h16M4 5v10M8 5v10M12 5v10" stroke="#5a5f65" stroke-width="1.200"/><path d="M12 1v7" stroke="#dbe9f2" stroke-width="2"/></symbol>
<symbol id="snd" viewBox="0 0 16 16"><path d="M0 5h4l5-4v14l-5-4H0z" fill="#ccc"/><path d="M11 5c2 2 2 4 0 6M13 3c3 3 3 7 0 10" fill="none" stroke="#bbb" stroke-width="1.300"/></symbol>
<symbol id="clock" viewBox="0 0 16 16"><circle cx="8" cy="8" r="7" fill="none" stroke="#bbb" stroke-width="1.600" stroke-dasharray="9 2"/><path d="M8 3v9M5 7l3-4" stroke="#e0703f" stroke-width="1.500"/></symbol>
<symbol id="run" viewBox="0 0 16 16"><circle cx="4" cy="4" r="3" fill="none" stroke="#bbb" stroke-width="1.500"/><path d="M6 9h5l4-3M11 8l-3 7M10 11l5 4" stroke="#e08a3f" stroke-width="2.500" fill="none"/></symbol>
<symbol id="help" viewBox="0 0 16 16"><circle cx="8" cy="8" r="8" fill="#82ad2c"/><text x="8" y="12.500" text-anchor="middle" class="glyph-q">?</text></symbol>
<symbol id="script" viewBox="0 0 16 16"><path d="M0 0h16v16H0z" fill="#ccc"/><path d="M6 5H4v8h2M8 5v8M12 5H9v8h4M1 2h14" stroke="#444" stroke-width="1.500" fill="none"/></symbol>
</defs>
</svg>

<header>
<div class="menurow">
<svg class="i home" role="img" aria-label="Home"><use href="#home"/></svg>
<nav class="menu mainmenu"><a href="#">File</a><a href="#">Edit</a><a href="#">Create</a><a href="#">Select</a><a href="#">Modify</a><a href="#">Display</a><a href="#">Windows</a><a href="#">Mesh</a><a href="#">Edit Mesh</a><a href="#">Mesh Tools</a><a href="#">Mesh Display</a><a href="#">Curves</a><a href="#">Surfaces</a><a href="#">Deform</a><a href="#">UV</a><a href="#">Generate</a><a href="#">Cache</a><a href="#">Arnold</a><a href="#">Help</a></nav>
<div class="workspace"><label for="ws">Workspace:</label><select id="ws" class="sel"><option>General*</option></select></div>
</div>
<div class="status">
<select class="sel mode" aria-label="Menu set"><option>Modeling</option></select>
<div class="cells files">
<svg><use href="#sep"/></svg><button aria-label="New"><svg><use href="#new"/></svg></button><button aria-label="Open"><svg><use href="#open"/></svg></button><button aria-label="Save"><svg><use href="#save"/></svg></button><button aria-label="Undo"><svg><use href="#undo"/></svg></button><button aria-label="Redo"><svg><use href="#redo"/></svg></button><svg><use href="#sepr"/></svg><svg><use href="#sep"/></svg><button aria-label="Hierarchy"><svg><use href="#selh"/></svg></button><button class="on" aria-label="Object"><svg><use href="#selo"/></svg></button><button aria-label="Component"><svg><use href="#selc"/></svg></button><svg><use href="#sepr"/></svg><svg><use href="#sep"/></svg><button aria-label="Snap grid"><svg><use href="#mgrid"/></svg></button><button aria-label="Snap curve"><svg><use href="#mcurve"/></svg></button><button aria-label="Snap point"><svg><use href="#mpoint"/></svg></button><button aria-label="Snap center"><svg><use href="#mcent"/></svg></button><button aria-label="Snap plane"><svg><use href="#mplane"/></svg></button><button aria-label="Make live"><svg><use href="#mag"/></svg></button>
</div>
<svg class="i"><use href="#caret"/></svg>
<input class="flat" aria-label="Live surface" value="No Live Surface">
<svg class="i"><use href="#sep"/></svg>
<svg class="i"><use href="#caret"/></svg>
<input class="flat" aria-label="Symmetry" value="Symmetry: Off">
<div class="cells render">
<svg><use href="#sepr"/></svg><svg><use href="#sep"/></svg><button aria-label="Render view"><svg><use href="#clap1"/></svg></button><button aria-label="Render"><svg><use href="#clap"/></svg></button><button aria-label="IPR"><svg><use href="#clap3"/></svg></button><button aria-label="Render settings"><svg><use href="#clapg"/></svg></button><button aria-label="Hypershade"><svg><use href="#hyper"/></svg></button><button aria-label="Render setup"><svg><use href="#clapg"/></svg></button><button aria-label="Light editor"><svg><use href="#rset"/></svg></button><button aria-label="Pause"><svg><use href="#pause"/></svg></button><svg><use href="#sepr"/></svg><svg><use href="#sep"/></svg>
</div>
<button class="user"><svg class="i"><use href="#user"/></svg><span>Suhayd Ahwal</span><i class="tri"></i></button>
<div class="cells sides"><button aria-label="Modeling toolkit"><svg><use href="#head"/></svg></button><button class="on" aria-label="Character controls"><svg><use href="#man"/></svg></button><button aria-label="Attribute editor"><svg><use href="#attr"/></svg></button><button aria-label="Tool settings"><svg><use href="#tool"/></svg></button><button aria-label="Channel box"><svg><use href="#head"/></svg></button></div>
</div>
<div class="shelf">
<div class="shelfside"><b></b><i></i></div>
<div class="shelfmain">
<nav class="tabs"><button>Curves / Surfaces</button><button class="act">Poly Modeling</button><button>Rigging</button><button>Animation</button><button>Rendering</button><button>FX</button><button>FX Caching</button><button>Custom</button><button>Arnold</button><button>MASH</button><button>Motion Graphics</button><button>XGen</button></nav>
<div class="cells tools">
<button aria-label="Sphere"><svg><use href="#sphere"/></svg></button><button aria-label="Cube"><svg><use href="#cube"/></svg></button><button aria-label="Cylinder"><svg><use href="#cyl"/></svg></button><button aria-label="Cone"><svg><use href="#cone"/></svg></button><button aria-label="Torus"><svg><use href="#torus"/></svg></button><button aria-label="Plane"><svg><use href="#plane"/></svg></button><button aria-label="Disc"><svg><use href="#disc"/></svg></button><svg class="bar"><use href="#bar"/></svg>
<button aria-label="Platonic"><svg><use href="#plat"/></svg></button><svg class="bar"><use href="#bar"/></svg>
<button aria-label="Super shape"><svg><use href="#super"/></svg></button><button aria-label="Sweep"><svg><use href="#helix"/></svg></button><button aria-label="Type"><svg><use href="#type"/></svg></button><button aria-label="SVG"><svg><use href="#svgi"/></svg></button><svg class="bar"><use href="#bar"/></svg>
<button aria-label="Content"><svg><use href="#sheet"/></svg></button><svg class="bar"><use href="#bar"/></svg>
<button aria-label="Pivot"><svg><use href="#axis"/></svg></button><button aria-label="Delete history"><svg><use href="#hist"/></svg></button><button aria-label="Freeze"><svg><use href="#freeze"/></svg></button><svg class="bar"><use href="#bar"/></svg>
<button aria-label="Combine"><svg><use href="#br"/><use href="#combine"/></svg></button><button aria-label="Boolean"><svg><use href="#bool"/></svg></button><button aria-label="Separate"><svg><use href="#separate"/></svg></button><button aria-label="Mirror"><svg><use href="#mirror"/></svg></button><button aria-label="Smooth"><svg><use href="#smooth"/></svg></button><button aria-label="Reduce"><svg><use href="#reduce"/></svg></button><button aria-label="Remesh"><svg><use href="#remesh"/></svg></button><button aria-label="Retopologize"><svg><use href="#br"/><use href="#retopo"/></svg></button><svg class="bar"><use href="#bar"/></svg>
<button aria-label="Extrude"><svg><use href="#extrude"/></svg></button><button aria-label="Bridge"><svg><use href="#bridge"/></svg></button><button aria-label="Bevel"><svg><use href="#bevel"/></svg></button><button aria-label="Extract"><svg><use href="#multi"/></svg></button><button aria-label="Circularize"><svg><use href="#circ"/></svg></button><button aria-label="Duplicate face"><svg><use href="#dup"/></svg></button><button aria-label="Collapse"><svg><use href="#collapse"/></svg></button><button aria-label="Merge"><svg><use href="#lattice"/></svg></button><button aria-label="Spread"><svg><use href="#smspread"/></svg></button><svg class="bar"><use href="#bar"/></svg>
<button aria-label="Multi-cut"><svg><use href="#cut"/></svg></button><button aria-label="Edge loop"><svg><use href="#loop"/></svg></button><button aria-label="Quad draw"><svg><use href="#quad"/></svg></button><svg class="bar"><use href="#bar"/></svg>
<button aria-label="Planar UV"><svg><use href="#uvp"/></svg></button><button aria-label="Cylindrical UV"><svg><use href="#uvc"/></svg></button><button aria-label="Spherical UV"><svg><use href="#uvs"/></svg></button><button aria-label="Automatic UV"><svg><use href="#uva"/></svg></button><button aria-label="Contour UV"><svg><use href="#uvr"/></svg></button><button aria-label="UV editor"><svg><use href="#uve"/></svg></button><button aria-label="Unfold"><svg><use href="#uvx"/></svg></button><button aria-label="Cut UV"><svg><use href="#uvk"/></svg></button>
</div>
</div>
</div>
</header>

<main>
<aside class="toolbox">
<div class="grip"></div>
<button aria-label="Select"><svg><use href="#tsel"/></svg></button><button aria-label="Lasso"><svg><use href="#tlas"/></svg></button><button aria-label="Paint select"><svg><use href="#tpaint"/></svg></button><button class="on" aria-label="Move"><svg><use href="#tmove"/></svg></button><button aria-label="Rotate"><svg><use href="#trot"/></svg></button><button aria-label="Scale"><svg><use href="#tscale"/></svg></button>
<div class="layouts"><button aria-label="Single view"><svg><use href="#lone"/></svg></button><button aria-label="Four view"><svg><use href="#lfour"/></svg></button><button aria-label="Two view"><svg><use href="#ltwo"/></svg></button><button class="on" aria-label="Outliner view"><svg><use href="#lout"/></svg></button></div>
<button class="find" aria-label="Search"><svg><use href="#find"/></svg></button>
<svg class="maya"><use href="#maya"/></svg>
</aside>

<section class="outliner">
<div class="otab"><h2>Outliner</h2></div>
<nav class="menu omenu"><a href="#">Display</a><a href="#">Show</a><a href="#">Help</a></nav>
<div class="search"><svg class="i"><use href="#frame"/></svg><div class="sbox"><input type="text" aria-label="Search" placeholder="Search..."><i class="tri"></i></div></div>
<div class="obody">
<ul class="tree">
<li class="dim"><svg class="i"><use href="#cam"/></svg>persp</li><li class="dim"><svg class="i"><use href="#cam"/></svg>top</li><li class="dim"><svg class="i"><use href="#cam"/></svg>front</li><li class="dim"><svg class="i"><use href="#cam"/></svg>side</li>
<li><svg class="i"><use href="#mesh"/></svg>pCube1</li><li><svg class="i"><use href="#set"/></svg>defaultLightSet</li><li><svg class="i"><use href="#set"/></svg>defaultObjectSet</li>
</ul>
<div class="vbar"><i class="tri up"></i><b></b><i class="tri"></i></div>
</div>
<div class="hbar"><i class="tri left"></i><b></b><i class="tri right"></i></div>
</section>

<section class="panel">
<nav class="menu vmenu"><a href="#">View</a><a href="#">Shading</a><a href="#">Lighting</a><a href="#">Show</a><a href="#">Renderer</a><a href="#">Panels</a></nav>
<div class="vtools">
<div class="cells vicons">
<svg class="s"><use href="#sep"/></svg><button aria-label="Camera select"><svg><use href="#va"/></svg></button><button aria-label="Lock camera"><svg><use href="#vbox"/></svg></button><button aria-label="Attributes"><svg><use href="#vdim"/></svg></button><button aria-label="Color"><svg><use href="#vdimc"/></svg></button><button aria-label="Image"><svg><use href="#vdimg"/></svg></button><svg class="s"><use href="#sep"/></svg>
<button aria-label="Camera"><svg><use href="#cam"/></svg></button><button aria-label="Camera lock"><svg><use href="#vcam2"/></svg></button><button aria-label="Camera settings"><svg><use href="#vcam2"/></svg></button><button aria-label="Bookmark"><svg><use href="#book"/></svg></button><button aria-label="Brush"><svg><use href="#vbrush"/></svg></button><button aria-label="Pan zoom"><svg><use href="#vnode"/></svg></button><button aria-label="Pencil"><svg><use href="#vpen"/></svg></button><svg class="s"><use href="#sep"/></svg>
<button aria-label="Grid"><svg><use href="#vgrid"/></svg></button><button aria-label="Film gate"><svg><use href="#vgate"/></svg></button><button aria-label="Resolution gate"><svg><use href="#vgatet"/></svg></button><button aria-label="Gate mask"><svg><use href="#vdark"/></svg></button><button aria-label="Field chart"><svg><use href="#vcross"/></svg></button><button aria-label="Safe action"><svg><use href="#vdiag"/></svg></button><button aria-label="Safe title"><svg><use href="#vt"/></svg></button><svg class="s"><use href="#sep"/></svg>
<button aria-label="Wireframe"><svg><use href="#vwire"/></svg></button><button aria-label="Shaded"><svg><use href="#vshade"/></svg></button><button aria-label="Default material"><svg><use href="#vhalf"/></svg></button><button aria-label="Wire on shaded"><svg><use href="#vtex"/></svg></button><button aria-label="Textured"><svg><use href="#vchk"/></svg></button><button aria-label="Lights"><svg><use href="#vlight"/></svg></button><button aria-label="Shadows"><svg><use href="#vshadow"/></svg></button><svg class="s"><use href="#sep"/></svg>
<button aria-label="Occlusion"><svg><use href="#vao"/></svg></button><button aria-label="Motion blur"><svg><use href="#vblur"/></svg></button><button aria-label="Anti-aliasing"><svg><use href="#vaa"/></svg></button><button aria-label="Depth of field"><svg><use href="#vdim"/></svg></button><svg class="s"><use href="#sep"/></svg><button aria-label="Isolate"><svg><use href="#viso"/></svg></button><svg class="s"><use href="#sep"/></svg><button aria-label="X-ray"><svg><use href="#vstack"/></svg></button><button aria-label="X-ray joints"><svg><use href="#vback"/></svg></button><button aria-label="X-ray components"><svg><use href="#vx"/></svg></button><svg class="s"><use href="#sep"/></svg>
</div>
<svg class="i"><use href="#vexp"/></svg><input class="num" aria-label="Exposure" value="0.00"><svg class="i"><use href="#vgam"/></svg><input class="num" aria-label="Gamma" value="1.00"><svg class="i"><use href="#vcm"/></svg><select class="sel aces" aria-label="View transform"><option>ACES 1.0 SDR-video (sRGB)</option></select>
</div>
<div class="canvas">
<svg class="scene" viewBox="167 87 697 390" preserveAspectRatio="xMidYMid slice" role="img" aria-label="Perspective view">
<path class="grid" d="M381 316 287 378.500M394 316 308 379M407 316 329 379M420 316 350 379M433 316 371 379M446 316 392 379M460 316 413 379M473 316 434 380M486 317 455 380M499 317 476 380M525 317 518 380M538 317 539 380M551 317 560 380M565 317 581 381M578 317 602 381M591 317 623 381M604 317 644 381M617 317 665 381M630 317 686 381M643 317.500 707 381.500"/>
<path class="grid" d="M287 378.500 707 381.500M294 373.600 702 376.500M301 369 697 372M308 364.700 693 367.400M314 360.600 689 363.200M320 356.700 685 359.200M325 353 681 355.400M331 349.600 677 351.900M336 346.200 674 348.500M340 343 671 345.100M349 337.100 665 339.100M353 334.400 662 336.300M357 331.700 659 333.600M361 329.200 657 331M365 326.700 654 328.500M368 324.400 652 326.100M372 322.200 649 323.800M375 320.100 647 321.700M378 318 645 319.500M381 316 643 317.500"/>
<path class="axis" d="M512 317 496 380M345 340 668 342"/>
<path d="m542 259-10 68-4 1z" fill="#000"/>
<path d="m501 191-11 94 39 43-14-63z" fill="#787878"/><path d="m490 285 25-20 14 63z" fill="#717171"/><path d="m501 191 41 68-13 69-14-63z" fill="#858585"/>
<path d="m490 285 11-94 41 68-13 69-28-137M490 285l25-20M490 285l8 9" fill="none" stroke="#67b3cb"/>
<path d="M500 189h2v3h-2zM541 257h2v3h-2zM514 264h2v2h-2zM489 284h2v3h-2zM527 327h4v2h-4z" fill="#c916ca"/>
<path d="M820 106h26v26h-26z" fill="#9b9b9b" stroke="#adadad"/><text class="front" transform="rotate(180 833.500 119)" x="833.500" y="121" text-anchor="middle">FRONT</text>
<path d="M180 461v3M171 460l8 2" stroke="#c02020" fill="none"/><path d="M178 459h3v4h-3z" fill="#2424cd"/><path d="M180 463v6" stroke="#20c52c" stroke-width="2"/><path d="m170 459 3 3m0-3-3 3" stroke="#c02020"/>
<text class="persp" x="511.500" y="472" text-anchor="middle">persp</text>
</svg>
</div>
</section>

<aside class="char">
<div class="chead">
<svg class="logo" viewBox="0 0 20 20"><defs><linearGradient id="lg" x1="0" y1="0" x2="0" y2="1"><stop offset="0" stop-color="#1589c9"/><stop offset=".6" stop-color="#0b679d"/><stop offset="1" stop-color="#0a2638"/></linearGradient></defs><rect width="20" height="20" rx="1" fill="url(#lg)"/><path d="M9 1c5 5 4 13-7 18" fill="none" stroke="#eee" stroke-width="1.100"/><path d="m1 5 3 1 5-4M4 6l-1 6-1 7M4 11l2 4v4" fill="none" stroke="#f2f2f2" stroke-width="1.200"/><circle cx="3" cy="3" r="1.300" fill="#fff"/><path d="M15 10h4l-2 2z" fill="#fff"/></svg>
<div class="fields"><label for="ch">Character:</label><select id="ch" class="sel"><option>None</option></select><label for="src" class="off">Source:</label><select id="src" class="sel off" disabled><option>None</option></select></div>
</div>
<h3><i class="tri"></i>Create</h3>
<div class="stack"><button>Create Skeleton</button><button>Create Control Rig</button><button>Create Character Definition</button><button>Create Custom Rig Mapping</button><button>Quick Rig Tool</button></div>
<h3><i class="tri"></i>Import Samples</h3>
<div class="stack"><button>Import Human IK Example</button><button>Import Animation Example</button></div>
</aside>
</main>

<footer>
<div class="timerow">
<div class="timeline"><div class="now">1</div><ol class="ticks"><li>5</li><li>10</li><li>15</li><li>20</li><li>25</li><li>30</li><li>35</li><li>40</li><li>45</li><li>50</li><li>55</li><li>60</li><li>65</li><li>70</li><li>75</li><li>80</li><li>85</li><li>90</li><li>95</li><li>100</li><li>105</li><li>110</li><li>115</li><li>120</li></ol></div>
<input class="field frame" aria-label="Current frame" value="1">
<div class="cells play"><button aria-label="Go to start"><svg><use href="#p1"/></svg></button><button aria-label="Step back"><svg><use href="#p2"/></svg></button><button aria-label="Previous key"><svg><use href="#p3"/></svg></button><button aria-label="Play backwards"><svg><use href="#p4"/></svg></button><button aria-label="Play"><svg><use href="#p5"/></svg></button><button aria-label="Next key"><svg><use href="#p6"/></svg></button><button aria-label="Step forward"><svg><use href="#p7"/></svg></button><button aria-label="Go to end"><svg><use href="#p8"/></svg></button></div>
</div>
<div class="rangerow">
<input class="field" aria-label="Animation start" value="1"><input class="field" aria-label="Range start" value="1">
<div class="range"><div class="thumb"><b></b><span>1</span><span class="end">120</span><b></b></div></div>
<input class="field" aria-label="Range end" value="120"><input class="field" aria-label="Animation end" value="200">
<div class="marks"><svg class="i"><use href="#sep"/></svg><button aria-label="Bookmark"><svg class="i"><use href="#bm"/></svg></button><svg class="i"><use href="#sep"/></svg></div>
<svg class="i"><use href="#caret"/></svg><input class="flat" aria-label="Character set" value="No Character Set">
<svg class="i"><use href="#caret"/></svg><input class="flat" aria-label="Animation layer" value="No Anim Layer">
<svg class="i"><use href="#sep"/></svg>
<select class="sel fps" aria-label="Frame rate"><option>24 fps</option></select>
<div class="marks opts"><button aria-label="Loop"><svg class="i"><use href="#rep"/></svg></button><button class="on" aria-label="Cached playback"><svg class="i"><use href="#cache"/></svg></button><svg class="i"><use href="#sep"/></svg><button aria-label="Sound"><svg class="i"><use href="#snd"/></svg></button><button aria-label="Auto key"><svg class="i"><use href="#clock"/></svg></button><button aria-label="Preferences"><svg class="i"><use href="#run"/></svg></button></div>
</div>
<div class="helprow">
<div class="hint"><svg class="i"><use href="#help"/></svg>Move Tool: Select an object to move.</div>
<div class="cmd"><label for="mel">MEL</label><input id="mel" class="mel"><input class="result" aria-label="Result"><button aria-label="Script editor"><svg class="i"><use href="#script"/></svg></button></div>
</div>
</footer>
</body>
</html>
```
FILE: styles.css
```css
* { box-sizing: border-box; }
body { margin: 0; height: 100vh; display: flex; flex-direction: column; overflow: hidden; background: #444; color: #d0d0d0; font: 6px/8px "Open Sans", "Noto Sans", sans-serif; }
button, input, select { font: inherit; color: inherit; border: 0; padding: 0; margin: 0; background: none; min-width: 0; border-radius: 0; }
button { display: flex; align-items: center; justify-content: center; }
svg { display: block; overflow: visible; }
a { color: inherit; text-decoration: none; }
h2, h3, ul, ol { margin: 0; padding: 0; font: inherit; list-style: none; }
.defs { position: absolute; width: 0; height: 0; }
.i { width: 10px; height: 10px; flex: none; }
.on { background: #5285a6; }
.off { opacity: .35; }
.menu { display: flex; gap: 8px; color: #d6d6d6; white-space: nowrap; }
.tri { flex: none; width: 0; height: 0; border: 3px solid transparent; border-top: 4px solid #ddd; border-bottom: 0; }
.tri.up { border-top: 0; border-bottom: 4px solid #aaa; }
.tri.left { border: 3px solid transparent; border-right: 4px solid #bbb; border-left: 0; }
.tri.right { border: 3px solid transparent; border-left: 4px solid #bbb; border-right: 0; }
.sel { appearance: none; height: 10px; padding: 0 12px 0 2px; line-height: 10px; background-color: #5d5d5d; background-image: linear-gradient(to bottom left, #c4c4c4 50%, transparent 50%), linear-gradient(to bottom right, #c4c4c4 50%, transparent 50%), linear-gradient(#525252, #525252); background-size: 3px 3px, 3px 3px, 10px 100%; background-position: right 5px center, right 2px center, right; background-repeat: no-repeat; }
.flat { width: 53px; height: 11px; padding: 0 3px; background: #404040; border: 1px solid #383838; }
.field { width: 48px; height: 14px; padding: 0 3px; background: #2b2b2b; border-radius: 1px; flex: none; }

.cells { display: flex; align-items: center; }
.cells > * { flex: 1 1 0; width: 0; min-width: 0; height: 12px; }
.cells svg { width: 9px; height: 9px; }
.cells > svg { min-width: 0; }

.menurow { height: 8px; display: flex; align-items: flex-start; padding: 0 1px 0 4px; line-height: 6px; }
.home { width: 8px; height: 7px; }
.mainmenu { margin-left: 4px; }
.workspace { margin-left: auto; display: flex; gap: 3px; }
.workspace .sel { width: 103px; height: 7px; line-height: 6px; margin-right: 7px; }
.status { height: 17px; display: flex; align-items: center; padding-left: 3px; border-bottom: 1px solid #3b3b3b; }
.mode { width: 53px; flex: none; }
.files { width: 234px; flex: none; }
.render { width: 148px; flex: none; }
.render button svg { width: 10px; height: 10px; }
.status .flat { margin: 0 2px 0 1px; }
.user { height: 12px; gap: 2px; padding: 0 2px; background: #555; flex: none; width: 64px; color: #ddd; }
.user .i { width: 8px; height: 8px; }
.sides { width: 62px; margin-left: auto; margin-right: -6px; flex: none; }

.shelf { display: flex; height: 37px; padding: 3px 0 0 3px; background: #373737; border-bottom: 1px solid #383838; }
.shelfside { width: 11px; background: #2f2f2f; display: flex; flex-direction: column; align-items: center; justify-content: space-around; margin-bottom: 1px; }
.shelfside b { width: 5px; height: 3px; background: #777; }
.shelfside i { width: 5px; height: 5px; border: 1px solid #aaa; border-radius: 50%; }
.shelfmain { flex: 1; display: flex; flex-direction: column; padding-left: 2px; min-width: 0; }
.tabs { display: flex; gap: 1px; height: 9px; }
.tabs button { padding: 0 6px; background: #3c3c3c; color: #9a9a9a; white-space: nowrap; }
.tabs .act { background: #444; color: #e2e2e2; font-weight: 600; padding: 0 5px; }
.tools { flex: 1; background: #444; padding: 0 28px 2px 2px; }
.tools > * { height: 20px; }
.tools button svg { width: 13px; height: 13px; }
.tools .bar { height: 18px; width: 18px; }
.glyph-t { font: 25px "Liberation Serif", serif; fill: #de924a; }
.glyph-svg { font: bold 9px "Open Sans", sans-serif; fill: #333; }
.glyph-num { font: bold 9px "Open Sans", sans-serif; fill: #36a5b8; }
.glyph-m { font: bold 13px "Open Sans", sans-serif; fill: #fff; }
.glyph-a { font: bold 13px "Open Sans", sans-serif; fill: #fff; }
.glyph-q { font: bold 13px "Open Sans", sans-serif; fill: #222; }

main { flex: 1; display: flex; min-height: 0; border-top: 2px solid #404040; background: #3c3c3c; }
.toolbox { width: 21px; background: #444; display: flex; flex-direction: column; align-items: flex-start; }
.grip { width: 17px; height: 2px; margin: 1px 0 2px; border-top: 1px dotted #777; }
.toolbox button { width: 17px; height: 20px; padding-right: 2px; }
.toolbox button svg { width: 15px; height: 15px; }
.toolbox > button:first-of-type svg { width: 13px; height: 13px; }
.layouts { border: solid #777; border-width: 2px 0; margin-top: 42px; padding: 2px 0 1px; }
.find { margin-top: 2px; }
.toolbox .find svg { width: 12px; height: 12px; }
.maya { width: 16px; height: 17px; margin: auto 0 5px; }

.outliner { width: 143px; margin-left: 1px; background: #444; display: flex; flex-direction: column; padding: 0 2px 6px 1px; }
.otab { background: #393939; height: 10px; }
.otab h2 { display: inline-block; height: 10px; line-height: 10px; padding: 0 5px 0 4px; background: #444; color: #ddd; }
.omenu { padding: 1px 4px; }
.search { display: flex; gap: 3px; align-items: center; margin: 3px 1px 0; padding-left: 1px; }
.search .i { width: 8px; height: 8px; }
.sbox { flex: 1; display: flex; align-items: center; background: #2b2b2b; padding: 1px 2px; }
.sbox input { flex: 1; height: 8px; outline: 0; }
.sbox input::placeholder { color: #999; }
.obody { flex: 1; display: flex; min-height: 0; }
.tree { flex: 1; background: #373737; }
.tree li { display: flex; align-items: center; gap: 1px; height: 11px; padding-left: 18px; color: #d6d6d6; }
.tree .i { width: 9px; height: 9px; }
.tree .dim .i { height: 8px; width: 8px; margin-right: 1px; }
.tree .dim { color: #757575; }
.vbar { width: 7px; margin-right: 2px; display: flex; flex-direction: column; align-items: center; gap: 2px; padding: 1px 0; }
.vbar b { flex: 1; width: 5px; background: #5d5d5d; border-radius: 2px; }
.hbar { display: flex; align-items: center; gap: 2px; height: 8px; margin-right: 9px; }
.hbar b { flex: 1; height: 5px; background: #5d5d5d; border-radius: 2px; }

.panel { flex: 1; min-width: 0; display: flex; flex-direction: column; background: #444; border: 1px solid #5a5a5a; border-right: 2px solid #666; margin: 0 2px 3px 0; }
.vmenu { padding: 1px 4px 0; }
.vtools { display: flex; align-items: center; height: 12px; }
.vicons { width: 397px; flex: none; }
.vicons > * { flex-grow: 5; }
.vicons > .s { flex-grow: 3; }
.vicons button svg { width: 9px; height: 9px; }
.vicons button:nth-child(8) svg { width: 8px; height: 7px; }
.vtools .i { width: 9px; height: 8px; margin: 0 1px; }
.num { width: 21px; height: 8px; padding: 0 2px; background: #2b2b2b; }
.aces { width: 109px; height: 9px; line-height: 9px; color: #ddd; }
.canvas { flex: 1; min-height: 0; overflow: hidden; background: linear-gradient(#5f5f5f, #5c5c5c 20px); }
.scene { width: 100%; height: 100%; overflow: hidden; }
.grid { fill: none; stroke: #484848; stroke-width: .6; }
.axis { fill: none; stroke: #404040; stroke-width: .8; }
.front { font: bold 5px "Open Sans", sans-serif; fill: #555; }
.persp { font: 600 6px "Open Sans", sans-serif; fill: #eee; }

.char { width: 156px; background: #444; padding: 3px 6px 0 5px; }
.chead { display: flex; justify-content: space-between; margin-bottom: 6px; }
.logo { width: 20px; height: 21px; }
.fields { display: grid; grid-template-columns: auto 83px; gap: 2px; line-height: 10px; text-align: right; padding-right: 2px; }
.fields .sel { text-align: left; }
.char h3 { display: flex; align-items: center; gap: 5px; height: 10px; padding-left: 4px; background: #5b5b5b; border-radius: 1px; color: #ccc; }
.stack { display: flex; flex-direction: column; gap: 2px; margin: 3px 16px 4px; }
.stack button { height: 13px; background: #5d5d5d; border-radius: 1px; color: #eee; }

.timerow { display: flex; height: 22px; border-top: 2px solid #393939; border-bottom: 1px solid #393939; padding-left: 3px; align-items: flex-start; }
.timeline { flex: 1; min-width: 0; height: 17px; background: #2b2b2b; display: flex; overflow: hidden; }
.now { width: 6px; margin-left: 4px; background: #555; flex: none; text-align: center; line-height: 21px; color: #ddd; }
.ticks { flex: 1; display: flex; margin-left: 22px; min-width: 0; }
.ticks li { flex: 0 0 4.29%; display: flex; flex-direction: column; color: #8a8a8a; line-height: 6px; padding-left: 1px; }
.ticks li::after { content: ""; margin-left: -1px; margin-top: 1px; height: 8px; border-left: 1px solid #999; }
.frame { height: 10px; margin: 3px 3px 0 4px; }
.play { width: 100px; margin: 2px -3px 0 0; flex: none; }
.rangerow { display: flex; align-items: center; height: 22px; padding-left: 3px; gap: 4px; border-bottom: 2px solid #3c3c3c; }
.range { flex: 1; background: #373737; height: 14px; padding: 2px; min-width: 0; }
.thumb { width: 61%; height: 11px; display: flex; align-items: center; gap: 2px; padding: 0 2px; background: #5d5d5d; border-radius: 2px; }
.thumb b { width: 8px; height: 8px; background: #8d8d8d; border-radius: 2px; }
.thumb .end { margin-left: auto; }
.marks { display: flex; align-items: center; justify-content: space-between; width: 31px; flex: none; margin-left: -4px; }
.opts { width: 87px; margin: 0 -6px 0 0; }
.opts button { height: 13px; width: 13px; }
.rangerow > .i { width: 8px; height: 8px; margin-right: -4px; flex: none; }
.rangerow .flat { width: 56px; height: 13px; flex: none; }
.fps { width: 53px; height: 11px; flex: none; }
.helprow { display: flex; height: 12px; }
.hint { flex: 1; display: flex; align-items: center; gap: 3px; padding-left: 3px; }
.cmd { width: 488px; display: flex; align-items: center; gap: 3px; padding-left: 13px; border-left: 1px solid #393939; }
.cmd label { width: 16px; font-weight: 600; }
.cmd input { height: 11px; background: #2b2b2b; }
.mel { flex: 11 1 0; }
.result { flex: 16 1 0; }
.cmd button { width: 8px; }
```
